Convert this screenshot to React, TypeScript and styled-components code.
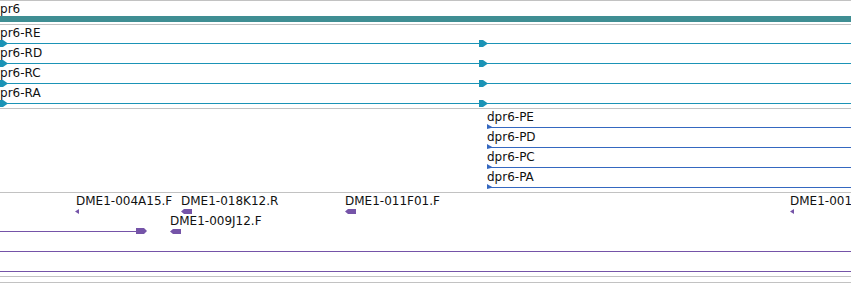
import React from "react";
import styled, { createGlobalStyle } from "styled-components";

const GlobalStyle = createGlobalStyle`
  body {
    margin: 0;
    background: #fff;
    font-family: "DejaVu Sans", "Liberation Sans", sans-serif;
    overflow: hidden;
  }
`;

const Browser = styled.div`
  width: 851px;
  height: 286px;
  overflow: hidden;
  display: flex;
  flex-direction: column;
`;

const Track = styled.div<{ $pad: number; $h?: number }>`
  border-top: 1px solid #c2c2c2;
  padding-bottom: ${(p) => p.$pad}px;
  display: flex;
  flex-direction: column;
  ${(p) => (p.$h !== undefined ? `height: ${p.$h}px;` : "")}
`;

const GeneTrack = styled(Track)`
  padding-top: 1px;
`;

const GeneLabel = styled.div`
  height: 14px;
  font-size: 12px;
  line-height: 14px;
  margin-left: -7.6px;
  color: #111;
  white-space: nowrap;
`;

const GeneBar = styled.div`
  height: 6px;
  background: #3f8e93;
`;

// one feature row: a lane for names, then a lane for the glyphs
const Row = styled.div`
  display: flex;
  flex-direction: column;
  height: 20px;
`;

const NameLane = styled.div`
  position: relative;
  height: 15px;
  padding-top: 1px;
  box-sizing: border-box;
`;

const GlyphLane = styled.div`
  position: relative;
  height: 5px;
`;

const Name = styled.span<{ $x: number }>`
  position: absolute;
  left: ${(p) => p.$x}px;
  font-size: 12px;
  line-height: 14px;
  color: #111;
  white-space: nowrap;
`;

const Strand = styled.div<{ $x: number; $w: number; $color: string }>`
  position: absolute;
  left: ${(p) => p.$x}px;
  width: ${(p) => p.$w}px;
  top: 3px;
  height: 1px;
  background: ${(p) => p.$color};
`;

const Glyph = styled.svg<{ $x: number; $top: number }>`
  position: absolute;
  left: ${(p) => p.$x}px;
  top: ${(p) => p.$top}px;
  overflow: visible;
`;

const TEAL = "#1b93b6";
const BLUE = "#3568c0";
const PURPLE = "#7554a8";

type Shape = "chevron" | "tri" | "ltri" | "lblock" | "rblock";

const shapes: Record<Shape, { w: number; h: number; top: number; pts: string }> = {
  chevron: { w: 9, h: 7, top: 0, pts: "0,0 4,0 9,3.5 4,7 0,7" },
  tri: { w: 6, h: 5, top: 0, pts: "0,0 6,3.5 0,5" },
  ltri: { w: 4, h: 5, top: 1, pts: "4,0 0,2.5 4,5" },
  lblock: { w: 11, h: 5, top: 1, pts: "0,2.5 3,0 11,0 11,5 3,5" },
  rblock: { w: 11, h: 6, top: 0, pts: "0,0 8,0 11,3 8,6 0,6" },
};

function Arrow({ x, shape, color }: { x: number; shape: Shape; color: string }) {
  const s = shapes[shape];
  return (
    <Glyph $x={x} $top={s.top} width={s.w} height={s.h} viewBox={`0 0 ${s.w} ${s.h}`}>
      <polygon points={s.pts} fill={color} />
    </Glyph>
  );
}

type Feature = {
  name?: string;
  x: number;
  shape?: Shape;
  line?: [number, number];
};

function FeatureRow({ items, color }: { items: Feature[]; color: string }) {
  return (
    <Row>
      <NameLane>
        {items
          .filter((f) => f.name)
          .map((f) => (
            <Name key={f.name} $x={f.x}>
              {f.name}
            </Name>
          ))}
      </NameLane>
      <GlyphLane>
        {items.map((f, i) => (
          <React.Fragment key={i}>
            {f.line && <Strand $x={f.line[0]} $w={f.line[1]} $color={color} />}
            {f.shape && <Arrow x={f.x} shape={f.shape} color={color} />}
          </React.Fragment>
        ))}
      </GlyphLane>
    </Row>
  );
}

const transcripts = ["dpr6-RE", "dpr6-RD", "dpr6-RC", "dpr6-RA"];
const proteins = ["dpr6-PE", "dpr6-PD", "dpr6-PC", "dpr6-PA"];

const clones: Feature[][] = [
  [
    { name: "DME1-004A15.F", x: 76 },
    { x: 75, shape: "ltri" },
    { name: "DME1-018K12.R", x: 181, shape: "lblock" },
    { name: "DME1-011F01.F", x: 345, shape: "lblock" },
    { name: "DME1-001A01.F", x: 790, shape: "ltri" },
  ],
  [
    { x: 136, shape: "rblock", line: [0, 137] },
    { name: "DME1-009J12.F", x: 170, shape: "lblock" },
  ],
  [{ x: 0, line: [0, 851] }],
  [{ x: 0, line: [0, 851] }],
];

export default function App() {
  return (
    <>
      <GlobalStyle />
      <Browser>
        <GeneTrack $pad={2}>
          <GeneLabel>dpr6</GeneLabel>
          <GeneBar />
        </GeneTrack>

        <Track $pad={3}>
          {transcripts.map((name) => (
            <FeatureRow
              key={name}
              color={TEAL}
              items={[
                { name, x: -7.6, line: [0, 851] },
                { x: -1, shape: "chevron" },
                { x: 479, shape: "chevron" },
              ]}
            />
          ))}
        </Track>

        <Track $pad={3}>
          {proteins.map((name) => (
            <FeatureRow
              key={name}
              color={BLUE}
              items={[{ name, x: 487, shape: "tri", line: [487, 364] }]}
            />
          ))}
        </Track>

        <Track $pad={3}>
          {clones.map((items, i) => (
            <FeatureRow key={i} color={PURPLE} items={items} />
          ))}
        </Track>

        <Track $pad={0} $h={5} />
        <Track $pad={0} />
      </Browser>
    </>
  );
}
